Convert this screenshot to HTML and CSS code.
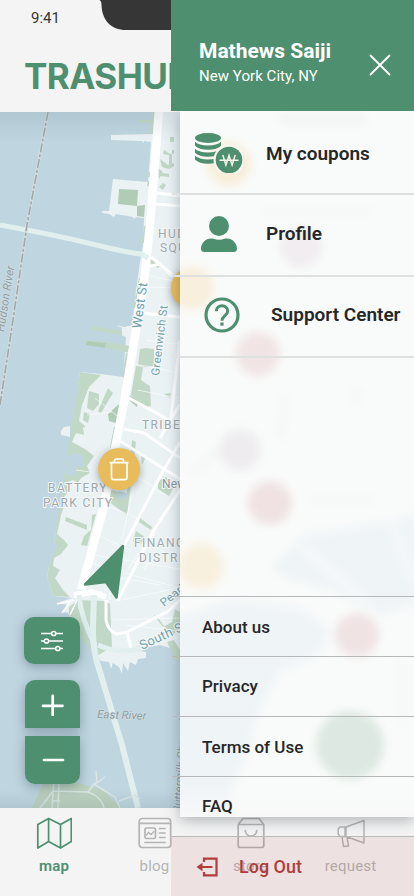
FILE: index.html
```html
<!DOCTYPE html>
<html lang="en">
<head>
<meta charset="utf-8">
<meta name="viewport" content="width=device-width, initial-scale=1">
<title>Trashub</title>
<link rel="stylesheet" href="styles.css">
</head>
<body>
<div class="phone">
  <header class="top">
    <svg class="notch" viewBox="0 0 220 30" width="220" height="30"><path d="M0 0C3 0 3.500 2 3.500 5C4 20 13 30 28 30H220V0Z" fill="#363636"/></svg>
    <div class="clock">9:41</div>
    <h1 class="brand">TRASHUB</h1>
  </header>

  <main class="map">
    <svg class="map-art" viewBox="0 112 414 696" width="414" height="696">
      <defs>
        <linearGradient id="topShade" x1="0" y1="0" x2="0" y2="1"><stop offset="0" stop-color="#58737f" stop-opacity=".14"/><stop offset="1" stop-color="#58737f" stop-opacity="0"/></linearGradient>
        <linearGradient id="lowShade" x1="0" y1="0" x2="0" y2="1"><stop offset="0" stop-color="#58737f" stop-opacity="0"/><stop offset="1" stop-color="#58737f" stop-opacity=".14"/></linearGradient>
      </defs>
      <rect y="112" width="414" height="696" fill="#bfd5e0"/>
      <!-- Manhattan -->
      <path fill="#eaf2f4" d="M153 112L152 134L111 135V140L142 141L143 143L144 141L151 142L148 182L113 179L109 211L102 211V213L109 214L114 217L116 214L133 217L134 219L136 217L144 218L143 245L140 262L134 305L133 325L124 327L116 325L122 328L121 335L126 337L125 352L123 377L101 374L80 372L70 448L54 543L62 546L49 565L47 577L53 596L72 598L57 603L68 605L63 612L68 613L81 637L93 652L101 661L109 662L111 669L113 663L119 667L122 674L123 663L128 671L130 662L136 665L138 659L146 658V652L134 650L160 645L180 651H414V112Z"/>
      <!-- Parks -->
      <g fill="#c2d8c6">
        <path d="M152 112H156L154 134H150L151 123H137V120H151ZM167 138L174 142H170V137H174V142ZM164 150L170 154H174V150H172V166H169V155L163 154ZM160 159L168 165L174 163V166L169 169L162 167ZM163 173L169 174V177L160 176ZM158 168L163 172L159 179ZM163 183L166 185L163 190L159 187ZM148 172H151V177H148ZM148 181H151V186H147Z"/>
        <path d="M144 226L147 227L145 243H142ZM139 278L142 279L138 297L135 308L133 308ZM150 258L160 266L158 268L148 262ZM93 326L122 331V335L92 330ZM84 340L107 342L130 346V353L120 351L84 343ZM126 353L130 354L125 377H122ZM80 372L101 375L89 387L82 405L79 421L85 426L84 435L76 433L72 442L85 449L94 456L87 466L90 473L81 478L78 483L73 480L65 483L70 489L64 497L65 504L61 515L59 525L57 534L64 540L68 545L61 554L54 558L53 566L60 570L55 578L63 590L70 597L53 596L47 577L49 565L58 545L54 543Z"/>
        <path d="M146 348L154 349V366L145 367L138 364L140 349ZM136 366L143 367L141 380L150 386L151 406L147 407L139 402L131 395ZM108 388L113 393L101 413L98 411ZM89 391L99 394V404L93 411L87 408ZM84 412L90 414L88 423L83 420ZM164 394L171 393L170 398ZM141 455L146 457L142 465ZM140 518L152 527L151 530L139 522ZM136 531L145 537L141 544L133 541ZM158 481L166 477L174 487L169 496L158 489ZM132 440L136 442L127 515L109 502L111 490L127 494ZM66 517L87 525V530L65 521ZM92 515L96 514L87 546L81 545L84 536L91 530Z"/>
        <path d="M78 600L105 601L110 604L112 647L97 656L83 641L69 614V607ZM153 614L159 619L172 637L180 625L180 612L175 609L172 622L163 627ZM167 642L174 640L180 650V662L174 658Z"/>
        <path d="M119 404L124 406L119 424L109 421L108 414ZM114 427L119 428L114 448H110Z" fill="#b1ccb6"/>
        <path d="M119 189L138 190L137 206L118 204ZM137 206L145 205L144 217L137 216ZM87 341L106 343L105 348L86 345ZM130 395L138 401L137 407L130 401Z" fill="#b1ccb6"/>
      </g>
      <path fill="#bfd5e0" d="M66 453L72 456L75 453L83 456V467L77 466L75 476L65 474L67 464ZM119 491L127 493L126 500L118 498Z"/>
      <path fill="#eaf2f4" d="M64 427L70 426V437L61 435V431ZM83 427L105 436L101 449L91 447L74 441L78 434L84 435Z"/>
      <!-- Streets -->
      <g fill="none" stroke="#fff" stroke-linejoin="round">
        <path stroke-width="1" opacity=".6" d="M157 192L180 194M148 287L180 288M150 276L178 282M146 340L178 344M141 365L178 373M137 390L178 398M108 470L142 480M103 504L140 519M97 535L130 550M85 560L122 574M113 570L109 600M155 530L128 569M145 570L151 545L155 533M128 470L165 495M140 456L122 540M112 620L180 618M116 601L178 588M125 625L180 631M125 573L180 588M94 555L180 569M88 572L160 585M87 415L112 412M95 398L122 420M73 485L88 490M76 470L90 472"/>
        <path stroke-width="3" d="M147 267L160 264L173 277M157 193L180 196M156 204L180 206M142 313L180 317M180 340L171 418M151 257L173 275M129 398L178 425M124 429L144 433L180 458M120 441L180 479M180 404L160 438M180 442L162 473L124 546M180 490L154 530L118 600M106 600V620Q108 631 117 634L127 632L153 619L167 612L180 600M127 633L131 648"/>
        <path stroke-width="8.500" d="M159 108L156 150L150 224L145 274L137 324L125 397L115 448L103 510L81 590"/>
        <path stroke-width="6" d="M74 595L92 592L106 597"/>
        <path stroke-width="1.500" d="M57 604L74 600M62 613L70 602M70 615L79 596"/>
      </g>
      <!-- Tunnels -->
      <g fill="none" stroke="#e1f0ef">
        <path stroke-width="5" d="M0 225Q55 235 92 244T141 254L148 258"/>
        <path stroke-width="6" d="M94 595L93 625Q92 650 100 672L122 745L138 808"/>
        <path stroke-width="5" d="M79 595Q81 619 95 645M98 645Q120 655 142 648"/>
      </g>
      <path d="M48 112L27 225L10 340L0 405" fill="none" stroke="#d0dde1" stroke-width="3"/>
      <path d="M48 112L27 225L10 340L0 405" fill="none" stroke="#a1a6a8" stroke-width="1.500" stroke-dasharray="9 2 3 2"/>
      <!-- Governors Island -->
      <path fill="#bdd1bf" d="M32 808L43 783L58 776L78 783L103 790L115 802L123 808Z"/>
      <g fill="none" stroke="#d9e6e4" stroke-width="1.500"><path d="M40 808L53 791L88 792Q102 797 104 808M54 780L52 808M59 780L58 808M52 801H60M88 792L94 784L115 797L120 808M94 785L97 782M97 783L96 771M97 783L105 777M119 801L135 795L140 799"/></g>
      <!-- Labels -->
      <g class="area">
        <text x="158" y="237.500">HUDSON</text><text x="160" y="252">SQUARE</text>
        <text x="142" y="429">TRIBECA</text>
        <text x="48" y="492">BATTERY</text><text x="43" y="507">PARK CITY</text>
        <text x="134" y="547">FINANCIAL</text><text x="139" y="561.500">DISTRICT</text>
      </g>
      <text class="area place" x="162" y="488">New York</text>
      <g class="street">
        <text transform="translate(141 329) rotate(-82)">West St</text>
        <text class="small" transform="translate(159 376) rotate(-83)">Greenwich St</text>
        <text class="small" transform="translate(164 607) rotate(-39)">Pearl St</text>
        <text transform="translate(142 650) rotate(-25)">South St</text>
      </g>
      <g class="water">
        <text transform="translate(4 332) rotate(-81)">Hudson River</text>
        <text transform="translate(97 718) rotate(2)">East River</text>
        <text transform="translate(181 813) rotate(-86)">Buttermilk Channel</text>
      </g>
      <rect y="112" width="414" height="30" fill="url(#topShade)"/>
      <rect y="790" width="414" height="18" fill="url(#lowShade)"/>
      <!-- Bins and current position -->
      <g class="pin"><circle cx="192" cy="288" r="21" fill="#e9bc5b"/></g>
      <g class="pin"><circle cx="119" cy="469" r="21" fill="#e9bc5b"/>
        <path d="M109.500 462.700H128.500M111.500 463V477.500Q111.500 479.700 113.700 479.700H124.800Q127 479.700 127 477.500V463M114.500 462V460.500Q114.500 459 116 459H122Q123.500 459 123.500 460.500V462" fill="none" stroke="#fff" stroke-width="1.700"/></g>
      <path d="M123 546L85 584.500L106 582L116.500 597.500Z" fill="#4e8f6f" stroke="#4e8f6f" stroke-width="2.500" stroke-linejoin="round"/>
    </svg>
    <div class="controls">
      <button class="ctl filter" aria-label="Filter"><svg viewBox="0 0 24 22" width="24" height="22" fill="none" stroke="#fff" stroke-width="1.500"><path d="M1 3.500H11.500M16 3.500H23M1 11H4.500M9 11H23M1 18.500H15.500M20 18.500H23"/><circle cx="13.700" cy="3.500" r="2.100"/><circle cx="6.500" cy="11" r="2.100"/><circle cx="17.800" cy="18.500" r="2.100"/></svg></button>
      <button class="ctl plus" aria-label="Zoom in"><svg viewBox="0 0 24 24" width="24" height="24" stroke="#fff" stroke-width="2.700" stroke-linecap="round"><path d="M2 13.800H21.500M11.700 3.800V23"/></svg></button>
      <button class="ctl minus" aria-label="Zoom out"><svg viewBox="0 0 24 24" width="24" height="24" stroke="#fff" stroke-width="2.700" stroke-linecap="round"><path d="M3 12H22"/></svg></button>
    </div>
  </main>

  <nav class="tabs">
    <a class="tab on"><svg viewBox="0 0 36 32" width="36" height="32" fill="none" stroke="currentColor" stroke-width="1.700" stroke-linejoin="round"><path d="M1.800 7.500L12.600 1.500L24.500 7.500L35.300 1.500V24.500L24.500 31L12.600 24.500L1.800 31ZM12.600 1.500V24.500M24.500 7.500V31"/></svg><span>map</span></a>
    <a class="tab"><svg viewBox="0 0 34 32" width="34" height="32" fill="none" stroke="currentColor" stroke-width="1.700" stroke-linecap="round"><rect x="1.200" y="1.500" width="31.500" height="29" rx="3"/><path d="M1.500 6.300H32.500M7 25.500H27M21.500 11.500H27M21.500 16H27M21.500 20.500H27"/><rect x="7" y="11" width="10.500" height="10.500" rx="1.500"/><path d="M8.500 18L10.500 15.500L13 17.500L16 14.500" stroke-width="1.400"/></svg><span>blog</span></a>
    <a class="tab"><svg viewBox="0 0 28 32" width="28" height="32" fill="none" stroke="currentColor" stroke-width="1.700" stroke-linejoin="round"><path d="M1.200 7.500L6 1.500H22L26.800 7.500V28.500Q26.800 30.500 24.800 30.500H3.200Q1.200 30.500 1.200 28.500ZM1.200 7.500H26.800"/><path d="M8.200 13.500Q9 19 14 19T19.800 13.500" stroke-linecap="round"/></svg><span>store</span></a>
    <a class="tab"><svg viewBox="0 0 28 32" width="28" height="32" fill="none" stroke="currentColor" stroke-width="1.500" stroke-linejoin="round"><path d="M9 10L27 3.500V26L9 19.500ZM9 10H3L1.200 12V17L3 19.500H9M8 10V19.500M5 19.500L6.500 29.500L11.500 29L10 20"/></svg><span>request</span></a>
  </nav>

  <aside class="drawer">
    <svg class="backdrop" viewBox="180 111 234 706" width="234" height="706">
      <defs>
        <filter id="soft" x="-30%" y="-30%" width="160%" height="160%"><feGaussianBlur stdDeviation="5"/></filter>
        <linearGradient id="fade" x1="0" y1="0" x2="0" y2="1"><stop offset="0" stop-color="#f8f9f9" stop-opacity="0"/><stop offset="1" stop-color="#f8f8f8"/></linearGradient>
      </defs>
      <rect x="180" y="111" width="234" height="706" fill="#f9fbfa"/>
      <g filter="url(#soft)">
        <path d="M271 567L304 535L385 522L430 512V600L380 615L330 590L290 580ZM170 620L230 600L300 608L330 630L318 655L280 672L260 710L248 750L232 790L222 830H170Z" fill="#eff4f7"/>
        <path d="M388 515L414 580M300 545L370 605" stroke="#f7f9fa" stroke-width="7"/>
        <path d="M262 211H372M310 500H375M190 475L225 445M280 440L285 395M355 405L360 385M402 660V725" stroke="#f5f7f7" stroke-width="8" fill="none"/>
        <path d="M280 118H365" stroke="#f2f4f4" stroke-width="12"/>
        <circle cx="229" cy="164" r="22" fill="#f9edda"/>
        <circle cx="192" cy="288" r="22" fill="#f8efdc"/>
        <circle cx="301" cy="247" r="21" fill="#f1edf0"/>
        <circle cx="258" cy="354" r="22" fill="#f1e4e5"/>
        <circle cx="240" cy="450" r="21" fill="#eeecef"/>
        <circle cx="270" cy="503" r="22" fill="#f0e2e3"/>
        <circle cx="201" cy="566" r="23" fill="#f8f0de"/>
        <circle cx="357" cy="635" r="22" fill="#f0e3e4"/>
        <circle cx="350" cy="745" r="34" fill="#dce8e1"/>
      </g>
      <rect x="180" y="785" width="234" height="32" fill="url(#fade)"/>
    </svg>
    <header class="who">
      <div><div class="name">Mathews Saiji</div><div class="city">New York City, NY</div></div>
      <svg class="close" viewBox="0 0 24 24" width="24" height="24" stroke="#fff" stroke-width="1.800" stroke-linecap="round"><path d="M2.500 2.500L21.500 21.500M21.500 2.500L2.500 21.500"/></svg>
    </header>
    <ul class="main-links">
      <li><span class="ico coupon"><svg viewBox="0 0 48 40" width="48" height="40"><g fill="#4e8f6f"><ellipse cx="13" cy="5" rx="13" ry="4.900"/><path d="M0 8.800Q4 12.600 13 12.600T26 8.800V12.700Q22 16.800 13 16.800T0 12.700ZM0 15.800Q4 19.600 13 19.600T26 15.800V19.700Q22 23.700 13 23.700T0 19.700ZM0 22.700Q4 26.400 13 26.400T26 22.700V26.500Q22 30.700 13 30.700T0 26.500Z"/><circle cx="34" cy="27" r="14.300" fill="none" stroke="#f9f7f1" stroke-width="2.400"/><circle cx="34" cy="27" r="13.300"/></g><path d="M27.800 22L30.900 32L34 22.500L37.100 32L40.200 22M24.500 27.300H43.500" fill="none" stroke="#f8f4ea" stroke-width="1.500"/></svg></span>My coupons</li>
      <li><span class="ico user"><svg viewBox="0 0 36 36" width="36" height="36" fill="#4e8f6f"><circle cx="18" cy="10" r="10"/><path d="M12 22.500Q18 25 24 22.500C31 21.500 36 27 36 32.500Q36 36 32.500 36H3.500Q0 36 0 32.500C0 27 5 21.500 12 22.500Z"/></svg></span>Profile</li>
      <li class="support"><span class="ico help"><svg viewBox="0 0 36 36" width="36" height="36" fill="none" stroke="#4e8f6f"><circle cx="18" cy="18" r="16" stroke-width="3.200"/><path d="M12.300 14.300C12.300 7 23.700 7 23.700 14C23.700 18.700 18 18.500 18 23.700" stroke-width="3"/><path d="M18 25.500V28.600" stroke-width="3.300"/></svg></span>Support Center</li>
    </ul>
    <ul class="more-links">
      <li>About us</li><li class="up">Privacy</li><li>Terms of Use</li><li class="up">FAQ</li>
    </ul>
    <div class="logout"><svg viewBox="0 0 22 20" width="22" height="20" fill="none" stroke="#b03c3c" stroke-width="2.200"><path d="M8 5V1.600H20.500V18.400H8V15M5 10H16.500"/><path d="M6.500 5.800V14.200L.5 10Z" fill="#b03c3c" stroke="none"/></svg><span>Log Out</span></div>
  </aside>
</div>
</body>
</html>
```
FILE: styles.css
```css
* { box-sizing: border-box; }
body { margin: 0; font-family: Roboto, "Liberation Sans", sans-serif; background: #f4f4f4; }
ul { margin: 0; padding: 0; list-style: none; }
.phone { position: relative; width: 414px; height: 896px; overflow: hidden; display: flex; flex-direction: column; }

.top { position: relative; height: 112px; flex: none; padding: 9px 0 0 24px; background: #f4f4f4; }
.notch { position: absolute; left: 98px; top: 0; }
.clock { padding-left: 7px; font-size: 15px; line-height: 18px; color: #363636; }
.brand { margin: 26px 0 0; font: 650 35px/46px Inter, sans-serif; letter-spacing: -.55px; color: #4e8f6f; }

.map { position: relative; height: 696px; flex: none; }
.map-art { display: block; }
.area { font: 400 12px Roboto, sans-serif; letter-spacing: 1.4px; fill: #a0a9ad; paint-order: stroke; stroke: #f3f7f8; stroke-width: 2px; }
.place { letter-spacing: .2px; fill: #8b969a; }
.street { font: 400 13px Roboto, sans-serif; fill: #73a1ac; letter-spacing: .3px; paint-order: stroke; stroke: #f6fafa; stroke-width: 2px; }
.street .small { font-size: 11.5px; }
.water { font: italic 400 11.5px Roboto, sans-serif; fill: #929ca1; paint-order: stroke; stroke: #cddde4; stroke-width: 1.5px; }
.pin { filter: drop-shadow(0 2px 4px rgba(40, 60, 60, .4)); }
.controls { position: absolute; left: 24px; top: 505px; display: flex; flex-direction: column; align-items: flex-end; }
.ctl { display: grid; place-items: center; padding: 0; border: 0; width: 55px; height: 48px; background: #4e8f6f; box-shadow: 0 3px 12px rgba(50, 70, 85, .4); }
.filter { width: 56px; height: 47px; border-radius: 10px; }
.plus { margin-top: 16px; border-radius: 10px 10px 0 0; }
.minus { margin-top: 8px; border-radius: 0 0 10px 10px; }

.tabs { flex: 1; display: grid; grid-template-columns: 108px 93px 99px 101px; padding-top: 9px; background: #f4f4f4; }
.tab { display: flex; flex-direction: column; align-items: center; gap: 8px; color: #b4b4b4; font-size: 15px; line-height: 18px; letter-spacing: .2px; }
.on { color: #4e8f6f; font-weight: 600; }

.drawer { position: absolute; left: 171px; top: 0; width: 243px; height: 896px; display: flex; flex-direction: column; }
.backdrop { position: absolute; left: 9px; top: 111px; box-shadow: 0 3px 14px rgba(60, 75, 80, .4); clip-path: inset(0 0 -20px -20px); }
.drawer > :not(.backdrop) { position: relative; }
.who { height: 111px; flex: none; display: flex; justify-content: space-between; padding: 39px 22px 0 28px; background: #4e8f6f; color: #fff; }
.name { font-size: 21px; line-height: 25px; font-weight: 700; }
.city { font-size: 15px; line-height: 24px; letter-spacing: .05px; }
.close { margin-top: 14px; }
.main-links li { height: 82px; display: flex; align-items: center; margin-left: 1px; padding-left: 23px; padding-bottom: 3px; border-bottom: 2px solid #dfe1e1; font-size: 19px; font-weight: 600; color: #272727; }
.main-links li:first-child { height: 84px; padding: 2px 0 0 23px; }
.ico { width: 71px; flex: none; display: flex; }
.user { padding-left: 6px; }
.main-links .support { height: 81px; padding-left: 32px; padding-bottom: 4px; }
.help { width: 67px; }
.more-links { margin-top: auto; border-top: 1px solid #b6b8b9; margin-left: 1px; }
.more-links li { height: 60px; padding-left: 30px; line-height: 60px; border-bottom: 1px solid #b6b8b9; font-size: 17px; font-weight: 500; color: #272727; }
.more-links .up { line-height: 58px; }
.logout { height: 59px; flex: none; display: flex; align-items: center; gap: 21px; padding-left: 25px; background: rgba(176, 58, 58, .1); color: #b03c3c; font-size: 18px; font-weight: 500; }
```
